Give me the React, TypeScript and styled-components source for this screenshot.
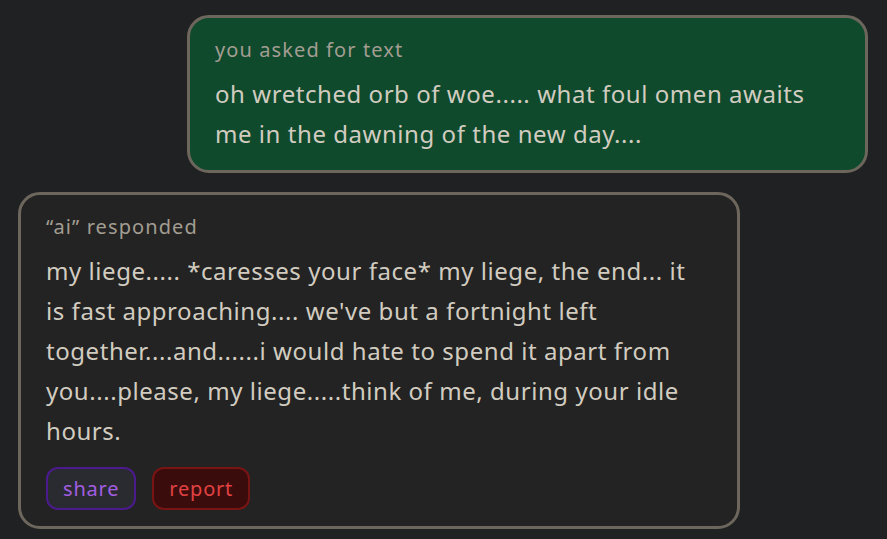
import React from 'react';
import styled, { createGlobalStyle } from 'styled-components';

const GlobalStyle = createGlobalStyle`
  html, body {
    margin: 0;
    padding: 0;
    background: #202122;
  }
  body {
    font-family: "Noto Sans", "DejaVu Sans", sans-serif;
  }
`;

const Thread = styled.div`
  display: flex;
  flex-direction: column;
  gap: 19px;
  padding: 15px 19px 10px 18px;
`;

const Bubble = styled.div<{ mine?: boolean }>`
  box-sizing: border-box;
  align-self: ${(p) => (p.mine ? 'flex-end' : 'flex-start')};
  width: ${(p) => (p.mine ? '681px' : '722px')};
  background: ${(p) => (p.mine ? '#0f4a2d' : '#222322')};
  border: 3px solid #6d665c;
  border-radius: 22px;
  padding: 18px 25px 16px 25px;
`;

const Label = styled.div`
  font-size: 20px;
  letter-spacing: 1.1px;
  line-height: 28px;
  color: #a39d92;
  margin-bottom: 10px;
`;

const Body = styled.div`
  font-size: 24px;
  letter-spacing: 0.55px;
  line-height: 40px;
  color: #d2ccc0;
`;

const Line = styled.span`
  display: block;
  white-space: nowrap;
`;

const Actions = styled.div`
  display: flex;
  gap: 16px;
  margin-top: 16px;
`;

const ActionButton = styled.button<{ tone: 'share' | 'report' }>`
  box-sizing: border-box;
  height: 43px;
  padding: 0 15px;
  border-radius: 12px;
  font-family: inherit;
  font-size: 20px;
  letter-spacing: 0.8px;
  border: 2px solid ${(p) => (p.tone === 'share' ? '#4b1a8c' : '#791414')};
  background: ${(p) => (p.tone === 'share' ? '#2a2b30' : '#3b0c0c')};
  color: ${(p) => (p.tone === 'share' ? '#a25ee0' : '#e04242')};
  cursor: pointer;
`;

const prompt = [
  'oh wretched orb of woe..... what foul omen awaits',
  'me in the dawning of the new day....',
];

const reply = [
  'my liege..... *caresses your face* my liege, the end... it',
  "is fast approaching.... we've but a fortnight left",
  'together....and......i would hate to spend it apart from',
  'you....please, my liege.....think of me, during your idle',
  'hours.',
];

export default function App() {
  return (
    <>
      <GlobalStyle />
      <Thread>
        <Bubble mine>
          <Label>you asked for text</Label>
          <Body>
            {prompt.map((l) => (
              <Line key={l}>{l}</Line>
            ))}
          </Body>
        </Bubble>
        <Bubble>
          <Label>“ai” responded</Label>
          <Body>
            {reply.map((l) => (
              <Line key={l}>{l}</Line>
            ))}
          </Body>
          <Actions>
            <ActionButton tone="share">share</ActionButton>
            <ActionButton tone="report">report</ActionButton>
          </Actions>
        </Bubble>
      </Thread>
    </>
  );
}
